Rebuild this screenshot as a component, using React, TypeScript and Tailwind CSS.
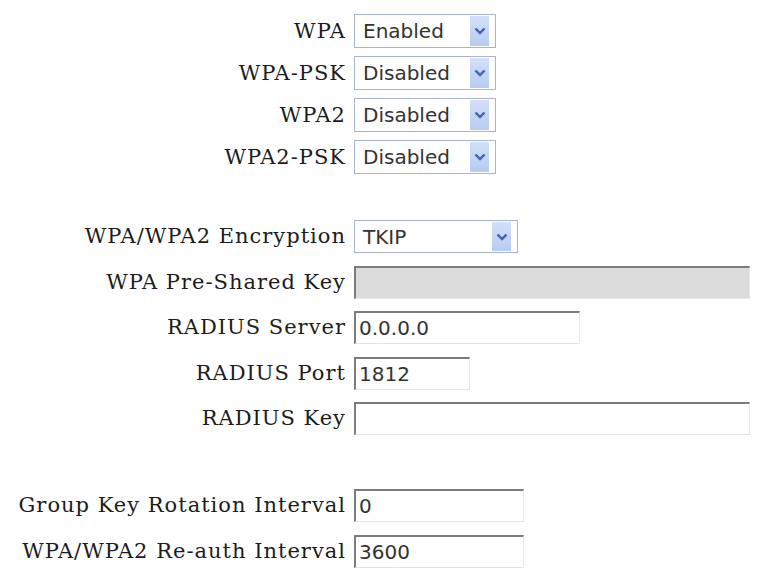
import React from "react";

const labelFont = { fontFamily: '"DejaVu Serif", serif' };
const fieldFont = { fontFamily: '"DejaVu Sans", sans-serif' };

function Label({ children }: { children: React.ReactNode }) {
  return (
    <div
      className="text-right text-[21px] leading-none tracking-[1px] text-[#1c1c1c] whitespace-nowrap"
      style={labelFont}
    >
      {children}
    </div>
  );
}

function Select({ value, width }: { value: string; width: string }) {
  return (
    <div
      className={`${width} h-full flex items-stretch bg-white border border-[#a9b6c9]`}
      style={fieldFont}
    >
      <span className="flex-1 flex items-center pl-[8px] text-[20px] leading-none text-[#333]">
        {value}
      </span>
      <span className="w-[19px] my-[1px] mr-[6px] flex items-center justify-center bg-gradient-to-b from-[#d3e0f8] to-[#b7cbf0]">
        <svg width="12" height="8" viewBox="0 0 12 8">
          <path d="M1.5 1.5 L6 6 L10.5 1.5" fill="none" stroke="#3d63b8" strokeWidth="2.4" />
        </svg>
      </span>
    </div>
  );
}

function TextBox({ value, width, disabled }: { value?: string; width: string; disabled?: boolean }) {
  return (
    <input
      readOnly
      value={value ?? ""}
      className={`${width} h-full pl-[3px] text-[20px] leading-none text-[#333] border-t-2 border-l-2 border-r border-b border-t-[#7c7c7c] border-l-[#7c7c7c] border-r-[#e6e6e6] border-b-[#e6e6e6] outline-none ${
        disabled ? "bg-[#dcdcdc]" : "bg-white"
      }`}
      style={fieldFont}
    />
  );
}

export default function App() {
  return (
    <div className="w-[759px] h-[571px] bg-white overflow-hidden pt-[14px]">
      {/* WPA modes */}
      <div className="grid grid-cols-[346px_auto] gap-x-[8px] gap-y-[8px] auto-rows-[34px] items-center">
        <Label>WPA</Label>
        <Select value="Enabled" width="w-[142px]" />
        <Label>WPA-PSK</Label>
        <Select value="Disabled" width="w-[142px]" />
        <Label>WPA2</Label>
        <Select value="Disabled" width="w-[142px]" />
        <Label>WPA2-PSK</Label>
        <Select value="Disabled" width="w-[142px]" />
      </div>

      {/* Encryption and RADIUS */}
      <div className="mt-[46px] grid grid-cols-[346px_auto] gap-x-[8px] gap-y-[12.5px] auto-rows-[33px] items-center">
        <Label>WPA/WPA2 Encryption</Label>
        <Select value="TKIP" width="w-[164px]" />
        <Label>WPA Pre-Shared Key</Label>
        <TextBox width="w-[396px]" disabled />
        <Label>RADIUS Server</Label>
        <TextBox value="0.0.0.0" width="w-[226px]" />
        <Label>RADIUS Port</Label>
        <TextBox value="1812" width="w-[116px]" />
        <Label>RADIUS Key</Label>
        <TextBox width="w-[396px]" />
      </div>

      {/* Intervals */}
      <div className="mt-[54px] grid grid-cols-[346px_auto] gap-x-[8px] gap-y-[13px] auto-rows-[33px] items-center">
        <Label>Group Key Rotation Interval</Label>
        <TextBox value="0" width="w-[170px]" />
        <Label>WPA/WPA2 Re-auth Interval</Label>
        <TextBox value="3600" width="w-[170px]" />
      </div>
    </div>
  );
}
